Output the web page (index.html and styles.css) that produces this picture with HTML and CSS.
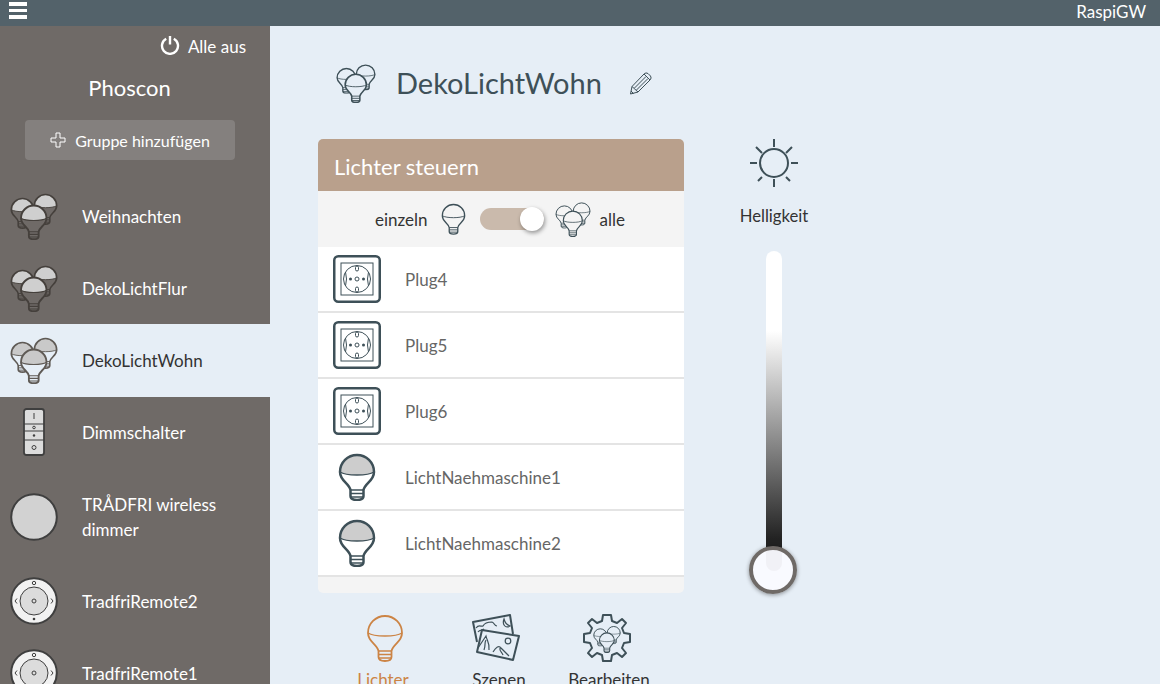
FILE: index.html
```html
<!doctype html>
<html lang="de">
  <head>
    <meta charset="UTF-8" />
    <meta name="viewport" content="width=device-width, initial-scale=1.0" />
    <title>RaspiGW</title>
    <link rel="stylesheet" href="styles.css">
  </head>

  <body>
    <svg class="defs" width="0" height="0">
      <defs>
        <symbol id="bulb" viewBox="5 0 38 48">
          <path class="bulb-body" d="M17.5 37C16 30 7 28 7 19A17 17 0 0 1 41 19C41 28 32 30 30.5 37V43C30.5 45.5 28 47 24 47C20 47 17.5 45.5 17.5 43Z" />
          <path class="bulb-dome" d="M7 19A17 17 0 0 1 41 19C35 23 13 23 7 19Z" />
          <path class="bulb-inner" d="M17.5 37H30.5M17.5 40.5H30.5M17.5 44H30.5M7 19C13 23 35 23 41 19" />
          <path class="bulb-line" d="M17.5 37C16 30 7 28 7 19A17 17 0 0 1 41 19C41 28 32 30 30.5 37V43C30.5 45.5 28 47 24 47C20 47 17.5 45.5 17.5 43Z" />
        </symbol>
        <symbol id="bulbs" viewBox="0 0 48 48">
          <use href="#bulb" x="0" y="5" width="25" height="32" />
          <use href="#bulb" x="23" y="1" width="25" height="32" />
          <use href="#bulb" x="9.5" y="12" width="28.5" height="36" />
        </symbol>
        <symbol id="socket" viewBox="0 0 48 48">
          <rect x="1.25" y="1.25" width="45.5" height="45.5" rx="4" class="frame" />
          <rect x="8" y="8" width="32" height="32" class="thin" />
          <circle cx="24" cy="24" r="13.5" class="thin" />
          <circle cx="24" cy="24" r="2" class="thin" />
          <circle cx="17.5" cy="24" r="1.5" class="dot" />
          <circle cx="30.5" cy="24" r="1.5" class="dot" />
          <rect x="22.5" y="11" width="3" height="5" rx="1.5" class="thin" />
          <rect x="22.5" y="32" width="3" height="5" rx="1.5" class="thin" />
          <path class="thin" d="M12.5 17Q14.5 24 12.5 31M35.5 17Q33.5 24 35.5 31" />
        </symbol>
        <symbol id="remote" viewBox="0 0 48 48">
          <circle cx="24" cy="24" r="22.8" class="remote" />
          <circle cx="24" cy="24" r="14" class="remote-in" />
          <circle cx="24" cy="24" r="2" class="remote-mark" />
          <circle cx="24" cy="6" r="1.7" class="remote-mark" />
          <circle cx="24" cy="42" r="1.3" class="remote-dot" />
          <path class="remote-mark" d="M7 21.5L5 24L7 26.5M41 21.5L43 24L41 26.5" />
        </symbol>
      </defs>
    </svg>

    <header class="topbar">
      <div class="burger"><span></span><span></span><span></span></div>
      <div class="gateway">RaspiGW</div>
    </header>

    <div class="layout">
      <nav class="sidebar">
        <div class="all-off">
          <svg class="power" viewBox="0 0 20 20">
            <path d="M6.2 3.8A8 8 0 1 0 13.8 3.8M10 1V9.5" />
          </svg>
          Alle aus
        </div>
        <div class="site-name">Phoscon</div>
        <div class="add-group">
          <svg class="plus" viewBox="0 0 16 16">
            <path d="M6 1H10V6H15V10H10V15H6V10H1V6H6Z" />
          </svg>
          Gruppe hinzufügen
        </div>

        <div class="side-item">
          <svg class="side-icon"><use href="#bulbs" /></svg>
          <span>Weihnachten</span>
        </div>
        <div class="side-item">
          <svg class="side-icon"><use href="#bulbs" /></svg>
          <span>DekoLichtFlur</span>
        </div>
        <div class="side-item active">
          <svg class="side-icon"><use href="#bulbs" /></svg>
          <span>DekoLichtWohn</span>
        </div>
        <div class="side-item">
          <svg class="side-icon" viewBox="0 0 48 48">
            <rect x="14" y="1" width="20" height="46" rx="2.5" class="switch-body" />
            <path class="switch-line" d="M14 16H34M14 23H34M14 32H34M24 5V11" />
            <circle cx="24" cy="19.5" r="1.3" class="switch-line" />
            <circle cx="24" cy="27.5" r="1.2" class="switch-dot" />
            <circle cx="24" cy="39.5" r="2" class="switch-line" />
          </svg>
          <span>Dimmschalter</span>
        </div>
        <div class="side-item">
          <svg class="side-icon" viewBox="0 0 48 48">
            <circle cx="24" cy="24" r="22.8" class="dimmer" />
          </svg>
          <span>TRÅDFRI wireless dimmer</span>
        </div>
        <div class="side-item">
          <svg class="side-icon"><use href="#remote" /></svg>
          <span>TradfriRemote2</span>
        </div>
        <div class="side-item">
          <svg class="side-icon"><use href="#remote" /></svg>
          <span>TradfriRemote1</span>
        </div>
      </nav>

      <main class="content">
        <div class="title-row">
          <svg class="title-icon"><use href="#bulbs" /></svg>
          <h1>DekoLichtWohn</h1>
          <svg class="pencil" viewBox="0 0 24 24">
            <path d="M1.5 23L3 15.5L15 3Q17 1 19 2.5L21.5 5Q23 7 21 9L9 21ZM3 15.5L9 21M5.5 17L17 5.5M7.5 19L19 7.5M15 3L21 9M2 20L4.5 22.5" />
          </svg>
        </div>

        <div class="columns">
          <div class="left-col">
            <section class="card">
              <div class="card-head">Lichter steuern</div>
              <div class="mode-row">
                <span>einzeln</span>
                <svg class="mode-bulb"><use href="#bulb" /></svg>
                <div class="toggle"><div class="toggle-knob"></div></div>
                <svg class="mode-bulbs"><use href="#bulbs" /></svg>
                <span>alle</span>
              </div>
              <div class="light-row">
                <svg class="row-icon"><use href="#socket" /></svg>
                <span>Plug4</span>
              </div>
              <div class="light-row">
                <svg class="row-icon"><use href="#socket" /></svg>
                <span>Plug5</span>
              </div>
              <div class="light-row">
                <svg class="row-icon"><use href="#socket" /></svg>
                <span>Plug6</span>
              </div>
              <div class="light-row">
                <svg class="row-icon"><use href="#bulb" /></svg>
                <span>LichtNaehmaschine1</span>
              </div>
              <div class="light-row">
                <svg class="row-icon"><use href="#bulb" /></svg>
                <span>LichtNaehmaschine2</span>
              </div>
              <div class="card-foot"></div>
            </section>

            <div class="tabs">
              <div class="tab current">
                <svg class="tab-icon"><use href="#bulb" /></svg>
                Lichter
              </div>
              <div class="tab">
                <svg class="tab-icon" viewBox="0 0 48 48">
                  <path class="scene" d="M5 28L1 8L38 1L41 20" />
                  <path class="scene-thin" d="M32 5C30 10 33 15 38 12C35 11 33 9 32 5ZM4 14C7 10 9 13 11 12C13 8 18 8 20 8C23 9 22 12 25 12M6 18C8 15 10 17 12 15" />
                  <path class="scene" d="M10 16L47 22L41 46L5 38Z" />
                  <circle class="scene-thin" cx="36" cy="27" r="2.8" />
                  <path class="scene-thin" d="M6 34L14 22C15 27 18 29 17 36M14 26C12 29 14 31 12 36M21 38C24 33 27 31 29 34L37 42M28 34C27 37 30 38 31 41" />
                </svg>
                Szenen
              </div>
              <div class="tab">
                <svg class="tab-icon" viewBox="0 0 48 48">
                  <path class="scene" d="M20 1H28L29 7L34 9L39 5L43 9L39 14L41 19L47 20V28L41 29L39 34L43 39L39 43L34 39L29 41L28 47H20L19 41L14 39L9 43L5 39L9 34L7 29L1 28V20L7 19L9 14L5 9L9 5L14 9L19 7Z" />
                  <use href="#bulbs" x="10" y="10" width="28" height="30" />
                </svg>
                Bearbeiten
              </div>
            </div>
          </div>

          <div class="brightness">
            <svg class="sun" viewBox="0 0 48 48">
              <circle cx="24" cy="24" r="14" />
              <path d="M24 0V8M24 40V48M0 24H7M41 24H48M6 8L12 14M42 8L36 14M8 42L12 38M40 42L36 38" />
            </svg>
            <div class="bright-label">Helligkeit</div>
            <div class="slider">
              <div class="slider-knob"></div>
            </div>
          </div>
        </div>
      </main>
    </div>
  </body>
</html>
```

FILE: styles.css
```css
* {
  box-sizing: border-box;
}

html,
body {
  height: 100%;
}

body {
  margin: 0;
  overflow: hidden;
  font-family: Lato, sans-serif;
  font-size: 17px;
  background-color: #e6eef6;
  color: #333;
  --ink: #3e5058;
  --under: #e6eef6;
  --dome: #e6eef6;
  --stroke: 2.5;
}

.defs {
  position: absolute;
}

.bulb-body {
  fill: var(--under);
}

.bulb-dome {
  fill: var(--dome);
}

.bulb-inner {
  fill: none;
  stroke: var(--ink);
  stroke-width: 1.4;
}

.bulb-line {
  fill: none;
  stroke: var(--ink);
  stroke-width: var(--stroke);
  stroke-linejoin: round;
}

.frame {
  fill: none;
  stroke: #3e5058;
  stroke-width: 2.5;
}

.thin {
  fill: none;
  stroke: #3e5058;
  stroke-width: 1;
}

.dot {
  fill: #3e5058;
}

.topbar {
  display: flex;
  justify-content: space-between;
  height: 26px;
  padding: 2px 14px 0 9px;
  background-color: #53626a;
  color: #fff;
}

.burger {
  display: flex;
  flex-direction: column;
  gap: 3px;
  width: 18px;
}

.burger span {
  height: 3.5px;
  background-color: #fff;
}

.gateway {
  line-height: 19px;
}

.layout {
  display: flex;
  height: 658px;
}

.sidebar {
  flex: none;
  width: 270px;
  background-color: #6f6a67;
  color: #fff;
  overflow: hidden;
  --ink: #45403c;
  --under: #6f6a67;
  --dome: #cfcfcf;
}

.all-off {
  display: flex;
  justify-content: flex-end;
  align-items: center;
  gap: 8px;
  height: 36px;
  padding: 4px 24px 0 0;
}

.power {
  width: 20px;
  height: 20px;
  margin-top: -2px;
}

.power path {
  fill: none;
  stroke: #fff;
  stroke-width: 2.4;
}

.site-name {
  height: 58px;
  padding: 12px 11px 0 0;
  text-align: center;
  font-size: 22px;
}

.add-group {
  display: flex;
  justify-content: center;
  align-items: center;
  gap: 9px;
  width: 210px;
  height: 40px;
  margin: 0 0 20px 25px;
  border-radius: 4px;
  background-color: #84807e;
  font-size: 16px;
}

.plus {
  width: 16px;
  height: 16px;
}

.plus path {
  fill: none;
  stroke: #fff;
  stroke-width: 1;
}

.side-item {
  display: flex;
  align-items: center;
  gap: 24px;
  padding: 12px 10px;
  line-height: 25px;
}

.side-item > span {
  flex: 1;
  padding: 11.5px 30px 11.5px 0;
}

.side-item.active {
  background-color: #e6eef6;
  box-shadow: 0 1px 0 #e6eef6;
  color: #333;
  --under: #e6eef6;
  --ink: #5f5a55;
  --dome: #c9c9c9;
}

.side-icon {
  flex: none;
  width: 48px;
  height: 48px;
}

.switch-body {
  fill: #dcdcdc;
  stroke: #3f3f3f;
  stroke-width: 1.8;
}

.switch-line {
  fill: none;
  stroke: #3f3f3f;
  stroke-width: 1;
}

.switch-dot,
.remote-dot {
  fill: #3f3f3f;
}

.dimmer {
  fill: #d2d2d2;
  stroke: #3f3f3f;
  stroke-width: 2;
}

.remote {
  fill: #f2f2f2;
  stroke: #3f3f3f;
  stroke-width: 2;
}

.remote-in {
  fill: #dcdcdc;
  stroke: #3f3f3f;
  stroke-width: 1;
}

.remote-mark {
  fill: none;
  stroke: #3f3f3f;
  stroke-width: 1;
}

.content {
  flex: 1;
  padding: 33px 0 0 48px;
}

.title-row {
  display: flex;
  align-items: center;
  height: 48px;
  padding-left: 18px;
}

.title-icon {
  width: 40px;
  height: 40px;
}

h1 {
  margin: -2px 0 0 20px;
  font-size: 29px;
  font-weight: 400;
  color: #3e5058;
}

.pencil {
  width: 24px;
  height: 24px;
  margin-left: 27px;
}

.pencil path {
  fill: none;
  stroke: #3e5058;
  stroke-width: 1;
}

.columns {
  display: flex;
  margin-top: 32px;
}

.left-col {
  width: 366px;
}

.card {
  border-radius: 5px;
  background-color: #f4f4f4;
  overflow: hidden;
  --under: #f4f4f4;
  --dome: #f4f4f4;
}

.card-head {
  height: 52px;
  padding: 14px 16px 0;
  background-color: #b9a08c;
  font-size: 22px;
  line-height: 28px;
  color: #fff;
}

.mode-row {
  display: flex;
  justify-content: center;
  align-items: center;
  height: 56px;
  padding-right: 2px;
  --stroke: 2;
}

.mode-bulb {
  width: 25px;
  height: 32px;
  margin: 0 14px 0 13px;
}

.toggle {
  position: relative;
  width: 64px;
  height: 22px;
  border-radius: 11px;
  background-color: #cabaac;
}

.toggle-knob {
  position: absolute;
  top: -1px;
  right: 0;
  width: 24px;
  height: 24px;
  border-radius: 50%;
  background-color: #fff;
  box-shadow: 1px 2px 4px rgba(0, 0, 0, 0.4);
}

.mode-bulbs {
  width: 36px;
  height: 36px;
  margin: 0 9px 0 11px;
}

.light-row {
  display: flex;
  align-items: center;
  gap: 24px;
  height: 66px;
  padding-left: 15px;
  border-bottom: 2px solid #e4e4e4;
  background-color: #fff;
  color: #666;
  --under: #fff;
  --dome: #cdcdcd;
}

.row-icon {
  flex: none;
  width: 48px;
  height: 48px;
}

.card-foot {
  height: 16px;
}

.tabs {
  display: flex;
  margin-top: 21px;
  padding-left: 27px;
}

.tab {
  display: flex;
  flex-direction: column;
  align-items: center;
  flex: none;
  width: 76px;
  margin-right: 40px;
  color: #333;
  white-space: nowrap;
}

.tab:nth-child(2) {
  margin-right: 34px;
}

.tab:nth-child(3) {
  margin-right: 0;
}

.tab-icon {
  width: 48px;
  height: 48px;
  margin-bottom: 7px;
}

.tab:nth-child(1) .tab-icon {
  margin-left: 4px;
}

.tab:nth-child(2) .tab-icon {
  margin-right: 6px;
}

.tab:nth-child(3) .tab-icon {
  margin-right: 4px;
}

.tab.current {
  color: #cc8445;
  --ink: #cc8445;
  --stroke: 1.8;
}

.scene {
  fill: none;
  stroke: #3e5058;
  stroke-width: 2;
  stroke-linejoin: round;
}

.scene-thin {
  fill: none;
  stroke: #3e5058;
  stroke-width: 1.2;
}

.brightness {
  display: flex;
  flex-direction: column;
  align-items: center;
  width: 90px;
  margin-left: 45px;
}

.sun {
  width: 48px;
  height: 48px;
}

.sun circle,
.sun path {
  fill: none;
  stroke: #3e5058;
  stroke-width: 2;
}

.bright-label {
  margin-top: 17px;
  font-size: 16.7px;
  line-height: 24px;
}

.slider {
  position: relative;
  width: 16px;
  height: 320px;
  margin-top: 23px;
  border-radius: 8px;
  background: linear-gradient(#fff 0, #fff 25%, #222 90%, #222 100%);
}

.slider-knob {
  position: absolute;
  left: -17px;
  bottom: -23px;
  width: 48px;
  height: 48px;
  border: 4px solid #6f6a67;
  border-radius: 50%;
  background-color: rgba(250, 250, 255, 0.96);
  box-shadow: 0 1px 4px rgba(0, 0, 0, 0.4);
}
```
